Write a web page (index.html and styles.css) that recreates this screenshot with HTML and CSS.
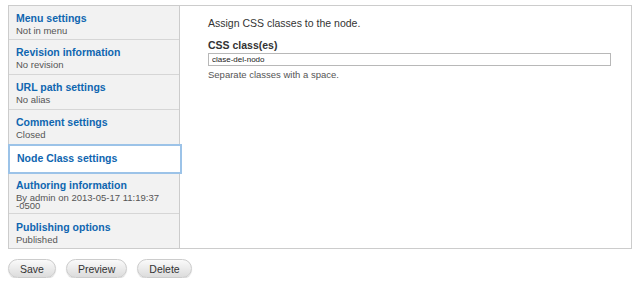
FILE: index.html
```html
<!DOCTYPE html>
<html lang="en">
<head>
  <meta charset="UTF-8">
  <title>Node Class settings</title>
  <link rel="stylesheet" href="styles.css">
</head>
<body>
  <div class="tabs">

    <!-- Vertical tab list -->
    <ul class="tab-list">
      <li class="tab"><a href="#">Menu settings</a><span class="summary">Not in menu</span></li>
      <li class="tab"><a href="#">Revision information</a><span class="summary">No revision</span></li>
      <li class="tab"><a href="#">URL path settings</a><span class="summary">No alias</span></li>
      <li class="tab"><a href="#">Comment settings</a><span class="summary">Closed</span></li>
      <li class="tab selected"><a href="#">Node Class settings</a></li>
      <li class="tab tall"><a href="#">Authoring information</a><span class="summary">By admin on 2013-05-17 11:19:37 -0500</span></li>
      <li class="tab last"><a href="#">Publishing options</a><span class="summary">Published</span></li>
    </ul>

    <!-- Tab pane -->
    <div class="pane">
      <p class="intro">Assign CSS classes to the node.</p>
      <label for="css-class">CSS class(es)</label>
      <input type="text" id="css-class" value="clase-del-nodo">
      <p class="description">Separate classes with a space.</p>
    </div>
  </div>

  <div class="actions">
    <button type="submit">Save</button>
    <button type="submit">Preview</button>
    <button type="submit">Delete</button>
  </div>
</body>
</html>
```

FILE: styles.css
```css
* {
  margin: 0;
  padding: 0;
  box-sizing: border-box;
}

body {
  font-family: "Liberation Sans", Arial, sans-serif;
  font-size: 10px;
  color: #333;
  background: #fff;
  padding: 5px 8px 0 8px;
}

/* Vertical tabs wrapper */
.tabs {
  display: flex;
  border: 1px solid #ccc;
  height: 244px;
}

.tab-list {
  list-style: none;
  width: 171px;
  background: #f2f2f2;
  border-right: 1px solid #ccc;
  display: flex;
  flex-direction: column;
}

.tab {
  height: 35px;
  padding: 6px 7px 0 7px;
  border-bottom: 1px solid #d6d6d6;
  display: flex;
  flex-direction: column;
}

.tab:first-child {
  height: 34px;
}

.tab a {
  color: #0f66b0;
  font-weight: bold;
  font-size: 10.5px;
  text-decoration: none;
  line-height: 13px;
}

.tab .summary {
  color: #555;
  font-size: 9.5px;
  line-height: 10px;
  margin-top: 1px;
}

.tab.selected {
  height: 30px;
  width: 174px;
  margin-left: -1px;
  margin-top: -1px;
  background: #fff;
  border: 2px solid #9cc3e8;
  padding: 0 7px 1px 7px;
  justify-content: center;
}

.tab.tall {
  height: 40px;
  padding-top: 5px;
}

.tab.tall .summary {
  line-height: 8px;
  margin-top: 2px;
}

.tab.last {
  flex: 1;
  border-bottom: none;
  padding-top: 7px;
}

/* Tab pane */
.pane {
  flex: 1;
  padding: 11px 20px 0 28px;
}

.intro {
  font-size: 10.5px;
  margin-bottom: 10px;
}

.pane label {
  display: block;
  font-weight: bold;
  font-size: 10.5px;
  margin-bottom: 2px;
}

.pane input {
  display: block;
  width: 100%;
  height: 13px;
  border: 1px solid #b8b8b8;
  font-family: inherit;
  font-size: 8px;
  padding: 0 3px;
  color: #222;
}

.description {
  font-size: 9.5px;
  color: #555;
  margin-top: 3px;
}

/* Form actions */
.actions {
  display: flex;
  gap: 10px;
  margin-top: 10px;
}

.actions button {
  font-family: inherit;
  font-size: 10.5px;
  color: #333;
  height: 19px;
  padding: 0 11px;
  border: 1px solid #ccc;
  border-radius: 10px;
  background: linear-gradient(#fafafa, #dcdcdc);
  box-shadow: 0 1px 1px rgba(0, 0, 0, 0.15);
}
```
